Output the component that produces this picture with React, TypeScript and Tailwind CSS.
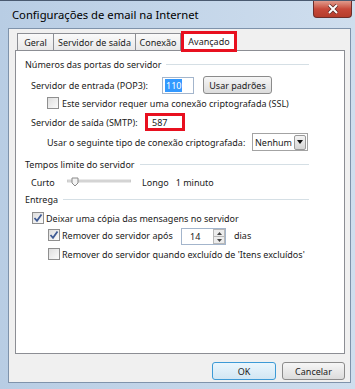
import React from "react";

function Check({ checked }: { checked?: boolean }) {
  return (
    <span className="w-[12px] h-[12px] border border-[#8f8f8f] bg-gradient-to-br from-[#dedede] to-[#fbfbfb] flex items-center justify-center shrink-0">
      {checked && (
        <svg width="10" height="10" viewBox="0 0 10 10">
          <path d="M1.5 5 L4 7.8 L8.5 1.5" fill="none" stroke="#3f5b95" strokeWidth="1.8" />
        </svg>
      )}
    </span>
  );
}

function Section({ title, className }: { title: string; className?: string }) {
  return (
    <div className={"flex items-center h-[14px] pl-[9px] pr-[35px] " + (className || "")}>
      <span>{title}</span>
      <span className="flex-1 h-px bg-[#d5dfe5] ml-[5px]" />
    </div>
  );
}

function WinButton({ label, def, className }: { label: string; def?: boolean; className?: string }) {
  return (
    <div
      className={
        "h-[18px] rounded-[3px] border flex items-center justify-center " +
        (def
          ? "border-[#3c9ad6] bg-gradient-to-b from-[#eaf6fd] to-[#d2e6f3] "
          : "border-[#8b8b8b] bg-gradient-to-b from-[#f6f6f6] to-[#dcdcdc] ") +
        (className || "")
      }
    >
      {label}
    </div>
  );
}

export default function App() {
  return (
    <div className="w-[355px] h-[389px] flex flex-col bg-gradient-to-r from-[#b8cde4] to-[#cfdeee] font-['Noto_Sans',sans-serif] text-[9px] leading-none text-[#1a1a1a] whitespace-nowrap border-t border-[#4a5a70] overflow-hidden">
      {/* title bar */}
      <div className="h-[27px] flex items-start relative">
        <span className="pl-[12px] pt-[8px] text-[11.25px] text-black">Configurações de email na Internet</span>
        <div className="absolute right-[3px] top-0 w-[39px] h-[17px] rounded-b-[4px] border border-[#6d2d2a] border-t-0 bg-gradient-to-b from-[#e09a8c] via-[#c7493a] to-[#b53d2c] flex items-center justify-center">
          <svg width="12" height="10" viewBox="0 0 12 10">
            <path d="M2 1 L10 9 M10 1 L2 9" stroke="#5a2a26" strokeWidth="3.4" />
            <path d="M2 1 L10 9 M10 1 L2 9" stroke="#ffffff" strokeWidth="2" />
          </svg>
        </div>
      </div>

      {/* client area */}
      <div className="ml-[8px] mr-[4px] mb-[6px] flex-1 bg-[#f0f0f0] border border-[#7f93ab] flex flex-col">
        {/* tabs */}
        <div className="mt-[2px] ml-[8px] flex items-end h-[21px] -mb-[2px] relative z-10">
          <div className="w-[37px] h-[17px] border border-[#8c8e94] border-b-0 bg-gradient-to-b from-[#fafafa] to-[#e8e8e8] flex items-center justify-center mb-[2px]">
            Geral
          </div>
          <div className="w-[82px] h-[17px] border border-[#8c8e94] border-b-0 border-l-0 bg-gradient-to-b from-[#fafafa] to-[#e8e8e8] flex items-center justify-center mb-[2px]">
            Servidor de saída
          </div>
          <div className="w-[45px] h-[17px] border border-[#8c8e94] border-b-0 border-l-0 bg-gradient-to-b from-[#fafafa] to-[#e8e8e8] flex items-center justify-center mb-[2px]">
            Conexão
          </div>
          <div className="w-[56px] h-[21px] border-[3px] border-[#e8101f] bg-white flex items-start justify-center pt-[3px]">
            Avançado
          </div>
        </div>

        {/* panel */}
        <div className="ml-[6px] w-[330px] h-[304px] bg-white border border-[#8c8e94] flex flex-col pt-[6px]">
          <Section title="Números das portas do servidor" />

          <div className="mt-[5px] h-[18px] flex items-center pl-[15px]">
            <span className="w-[131px]">Servidor de entrada (POP3):</span>
            <div className="w-[32px] h-[17px] border border-[#a3b5cc] bg-white flex items-center pl-[2px]">
              <span className="bg-[#3399ff] text-white px-[1px] py-[2px]">110</span>
            </div>
            <WinButton label="Usar padrões" className="ml-[9px] w-[69px]" />
          </div>

          <div className="mt-[2px] h-[14px] flex items-center pl-[31px]">
            <Check />
            <span className="ml-[3px]">Este servidor requer uma conexão criptografada (SSL)</span>
          </div>

          <div className="mt-[3px] h-[18px] flex items-center pl-[15px]">
            <span className="w-[114px]">Servidor de saída (SMTP):</span>
            <div className="w-[40px] h-[18px] border-[3px] border-[#e8101f] bg-white flex items-center pl-[4px]">
              587
            </div>
          </div>

          <div className="mt-[2px] h-[18px] flex items-center pl-[31px]">
            <span className="w-[205px]">Usar o seguinte tipo de conexão criptografada:</span>
            <div className="w-[56px] h-[18px] border border-[#a3a3a3] bg-white flex items-center">
              <span className="flex-1 pl-[2px]">Nenhum</span>
              <span className="w-[12px] h-[15px] mr-px border border-[#9a9a9a] rounded-[2px] bg-gradient-to-b from-[#f4f4f4] to-[#d6d6d6] flex items-center justify-center shrink-0">
                <svg width="6" height="4" viewBox="0 0 6 4">
                  <path d="M0 0 H6 L3 4 Z" fill="#111" />
                </svg>
              </span>
            </div>
          </div>

          <Section title="Tempos limite do servidor" className="mt-[6px]" />

          <div className="mt-[4px] h-[14px] flex items-center pl-[15px]">
            <span className="w-[36px]">Curto</span>
            <svg width="64" height="10" viewBox="0 0 64 10">
              <rect x="0" y="3" width="64" height="2" fill="#e2e2e2" stroke="#b5b5b5" strokeWidth="0.6" />
              <path d="M5 1 H11 V6 L8 9 L5 6 Z" fill="#f3f3f3" stroke="#8a8a8a" strokeWidth="1" />
            </svg>
            <span className="ml-[11px]">Longo</span>
            <span className="ml-[7px]">1 minuto</span>
          </div>

          <Section title="Entrega" className="mt-[3px]" />

          <div className="mt-[5px] h-[14px] flex items-center pl-[16px]">
            <Check checked />
            <span className="ml-[2px]">Deixar uma cópia das mensagens no servidor</span>
          </div>

          <div className="mt-[1px] h-[18px] flex items-center pl-[32px]">
            <Check checked />
            <span className="ml-[2px] w-[119px]">Remover do servidor após</span>
            <div className="w-[45px] h-[17px] mt-[3px] border border-[#a3b5cc] bg-white flex items-center">
              <span className="flex-1 pl-[8px]">14</span>
              <span className="w-[12px] h-[15px] flex flex-col">
                <span className="flex-1 border border-[#b8b8b8] bg-[#ececec] flex items-center justify-center">
                  <svg width="5" height="3" viewBox="0 0 5 3"><path d="M0 3 H5 L2.5 0 Z" fill="#444" /></svg>
                </span>
                <span className="flex-1 border border-t-0 border-[#b8b8b8] bg-[#ececec] flex items-center justify-center">
                  <svg width="5" height="3" viewBox="0 0 5 3"><path d="M0 0 H5 L2.5 3 Z" fill="#444" /></svg>
                </span>
              </span>
            </div>
            <span className="ml-[8px]">dias</span>
          </div>

          <div className="mt-[3px] h-[14px] flex items-center pl-[32px]">
            <Check />
            <span className="ml-[2px]">Remover do servidor quando excluído de 'Itens excluídos'</span>
          </div>
        </div>

        {/* buttons */}
        <div className="mt-[8px] flex justify-end gap-[6px] w-[336px]">
          <WinButton label="OK" def className="w-[64px]" />
          <WinButton label="Cancelar" className="w-[63px]" />
        </div>
      </div>
    </div>
  );
}
